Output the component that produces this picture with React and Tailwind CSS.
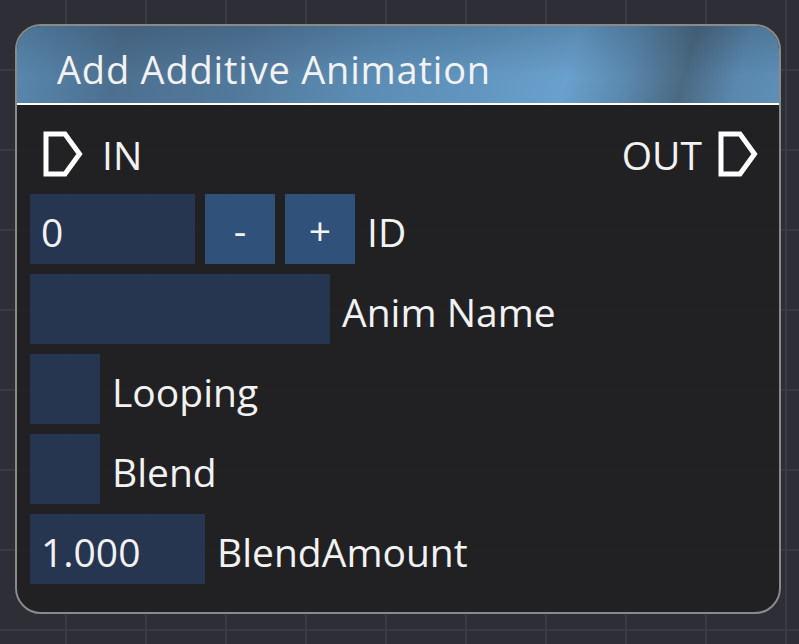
import React from "react";

function Pin() {
  return (
    <svg width="40" height="46" viewBox="0 0 40 46" className="shrink-0">
      <path
        d="M3 3 H22 L36.5 23 L22 43 H3 Z"
        fill="#222224"
        stroke="#ffffff"
        strokeWidth="5"
        strokeLinejoin="miter"
      />
    </svg>
  );
}

const font = { fontFamily: '"Open Sans", "Noto Sans", sans-serif' };

export default function App() {
  return (
    <div
      className="w-[799px] h-[644px] overflow-hidden bg-[#2e2e37] bg-[linear-gradient(to_right,#3a3a43_2px,transparent_2px),linear-gradient(to_bottom,#3a3a43_2px,transparent_2px)] bg-[length:80px_80px] bg-[position:65px_69px] pt-[24px] pl-[15px]"
      style={font}
    >
      <div className="w-[766px] h-[590px] border-2 border-[#8a8a8a] rounded-[26px] overflow-hidden bg-[rgba(33,33,35,0.94)] flex flex-col text-[#f2f2f2]">
        <div className="h-[79px] shrink-0 border-b-2 border-white bg-[linear-gradient(to_bottom,rgba(20,30,45,0.18),rgba(0,0,0,0)_65%),linear-gradient(105deg,#5a8ab1_0%,#4d7090_14%,#52799b_30%,#5b8bb2_45%,#6195bf_60%,#69a0cc_72%,#5a87ac_80%,#4b6982_87%,#5a88ae_94%,#5e8fb6_100%)] pl-[40px] pt-[20px] text-[38px] leading-[46px] tracking-[0.8px]">
          Add Additive Animation
        </div>
        <div className="flex flex-col pl-[13px] pr-[21px]">
          <div className="flex items-center justify-between mt-[26px] h-[46px] pl-[13px]">
            <div className="flex items-center gap-[19px]">
              <Pin />
              <span className="text-[39px] leading-none">IN</span>
            </div>
            <div className="flex items-center gap-[16px]">
              <span className="text-[39px] leading-none">OUT</span>
              <Pin />
            </div>
          </div>
          <div className="flex flex-col gap-[10px] mt-[17px] text-[39px] leading-none">
            <div className="flex items-center h-[70px]">
              <div className="w-[165px] h-[70px] bg-[#263650] pl-[11px] pt-[4px] flex items-center">0</div>
              <div className="ml-[10px] w-[70px] h-[70px] bg-[#30527a] flex items-center justify-center">-</div>
              <div className="ml-[10px] w-[70px] h-[70px] bg-[#30527a] flex items-center justify-center">+</div>
              <span className="ml-[12px] pt-[4px]">ID</span>
            </div>
            <div className="flex items-center h-[70px]">
              <div className="w-[300px] h-[70px] bg-[#263650]" />
              <span className="ml-[12px] pt-[4px]">Anim Name</span>
            </div>
            <div className="flex items-center h-[70px]">
              <div className="w-[70px] h-[70px] bg-[#263650]" />
              <span className="ml-[12px] pt-[4px]">Looping</span>
            </div>
            <div className="flex items-center h-[70px]">
              <div className="w-[70px] h-[70px] bg-[#263650]" />
              <span className="ml-[12px] pt-[4px]">Blend</span>
            </div>
            <div className="flex items-center h-[70px]">
              <div className="w-[175px] h-[70px] bg-[#263650] pl-[11px] pt-[4px] flex items-center">1.000</div>
              <span className="ml-[12px] pt-[4px]">BlendAmount</span>
            </div>
          </div>
        </div>
      </div>
    </div>
  );
}
